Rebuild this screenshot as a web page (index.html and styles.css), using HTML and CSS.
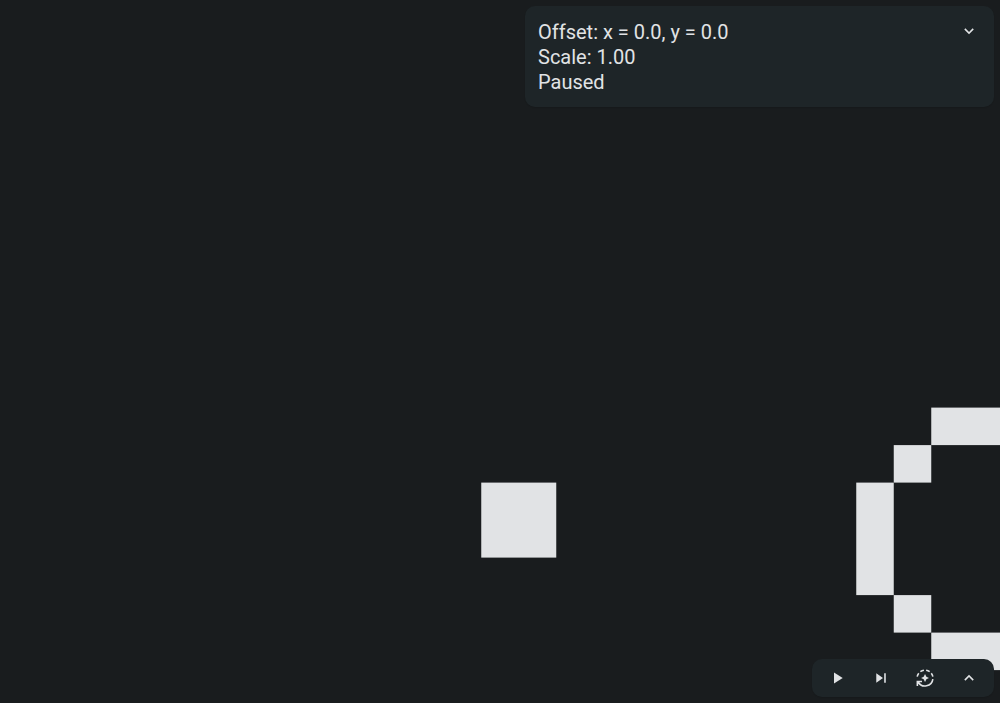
FILE: index.html
```html
<!DOCTYPE html>
<html lang="en">
<head>
<meta charset="utf-8">
<title>Game of Life</title>
<link rel="stylesheet" href="styles.css">
</head>
<body>
<main class="app">
  <svg class="universe" role="img" aria-label="Cells">
    <g transform="translate(-6.25 -4.9) scale(37.5)">
      <rect x="13" y="13" width="2" height="2"/>
      <rect x="23" y="13" width="1" height="3"/>
      <rect x="24" y="12" width="1" height="1"/>
      <rect x="24" y="16" width="1" height="1"/>
      <rect x="25" y="11" width="2" height="1"/>
      <rect x="25" y="17" width="2" height="1"/>
    </g>
  </svg>
  <section class="panel status">
    <div class="status-text">
      <p>Offset: x = 0.0, y = 0.0</p>
      <p>Scale: 1.00</p>
      <p>Paused</p>
    </div>
    <button class="icon-button" type="button" aria-label="Collapse status">
      <svg class="icon" viewBox="0 0 24 24"><path d="M16 8 11.4 12.6 6.8 8 5.4 9.4l6 6 6-6z"/></svg>
    </button>
  </section>
  <div class="panel toolbar">
    <button class="icon-button" type="button" aria-label="Play">
      <svg class="icon" viewBox="0 0 24 24"><path d="M7.6 4.4v14l11-7z"/></svg>
    </button>
    <button class="icon-button" type="button" aria-label="Step">
      <svg class="icon" viewBox="0 0 24 24"><path d="M5.4 17.4l8.5-6-8.5-6zM15.4 5.4v12h2v-12z"/></svg>
    </button>
    <button class="icon-button" type="button" aria-label="Autofit">
      <svg class="icon" viewBox="0 0 24 24">
        <g transform="translate(-.6 -.6)">
          <path class="ring" d="M2.1 10.2A10 10 0 0 1 4.1 5.9M6.1 3.9A10 10 0 0 1 10.6 2.1M13.4 2.1A10 10 0 0 1 17.9 3.9M19.9 5.9A10 10 0 0 1 21.9 10.2M21.9 13.3A10 10 0 0 1 3.3 17M2.3 22.2V16.3h5.9"/>
          <path d="M12 7l1.7 3.3L17 12l-3.3 1.7L12 17l-1.7-3.3L7 12l3.3-1.7z"/>
        </g>
      </svg>
    </button>
    <button class="icon-button" type="button" aria-label="More controls">
      <svg class="icon" viewBox="0 0 24 24"><path d="M11.4 7.4l-6 6 1.4 1.4 4.6-4.6 4.6 4.6 1.4-1.4z"/></svg>
    </button>
  </div>
</main>
</body>
</html>
```
FILE: styles.css
```css
* {
  box-sizing: border-box;
}

body {
  margin: 0;
  background: #191c1e;
  color: #e1e3e5;
  font-family: Roboto, sans-serif;
}

.app {
  position: relative;
  display: flex;
  flex-direction: column;
  justify-content: space-between;
  align-items: flex-end;
  min-height: 100vh;
  padding: 6px;
  overflow: hidden;
}

.universe {
  position: absolute;
  inset: 0;
  width: 100%;
  height: 100%;
  fill: #e1e3e5;
}

.panel {
  position: relative;
  display: flex;
  border-radius: 10px;
  background: #1e2528;
  box-shadow: 0 1px 1px rgba(0, 0, 0, 0.1);
}

.status {
  justify-content: space-between;
  align-items: flex-start;
  width: 469px;
  max-width: 100%;
  padding: 6px;
}

.status-text {
  padding: 8px 7px 6px;
  font-size: 20px;
  line-height: 25px;
}

.status-text p {
  margin: 0;
}

.toolbar {
  gap: 6px;
  padding: 0 6px;
}

.icon-button {
  display: grid;
  place-items: center;
  width: 38px;
  height: 38px;
  padding: 0;
  border: 0;
  border-radius: 50%;
  background: none;
  color: inherit;
  cursor: pointer;
}

.icon {
  width: 19px;
  height: 19px;
  overflow: visible;
  fill: currentColor;
}

.ring {
  fill: none;
  stroke: currentColor;
  stroke-width: 2;
}
```
